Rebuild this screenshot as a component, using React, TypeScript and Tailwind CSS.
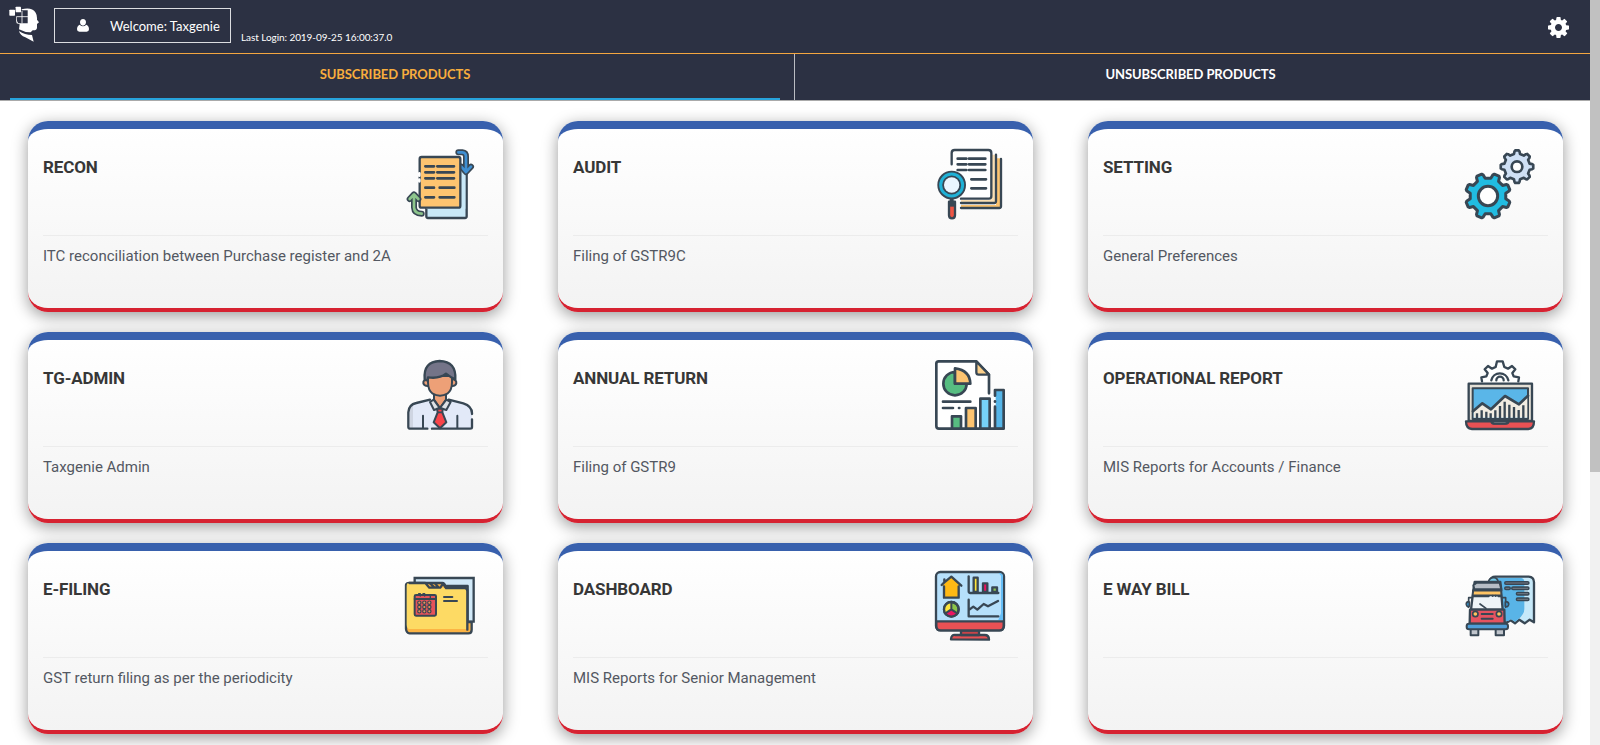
import type { ReactNode } from 'react';

const INK = '#384754';

function gearPath(cx: number, cy: number, outer: number, inner: number, teeth: number, phase = 0) {
  const step = (Math.PI * 2) / teeth;
  const pts: string[] = [];
  for (let i = 0; i < teeth; i++) {
    const a = i * step + phase;
    const corners: [number, number][] = [
      [-0.3, inner],
      [-0.21, outer - 3],
      [-0.14, outer],
      [0.14, outer],
      [0.21, outer - 3],
      [0.3, inner],
    ];
    for (const [f, r] of corners) {
      pts.push(`${(cx + Math.cos(a + f * step) * r).toFixed(1)} ${(cy + Math.sin(a + f * step) * r).toFixed(1)}`);
    }
  }
  return `M${pts.join('L')}Z`;
}

function Art({ top, children }: { top: number; children: ReactNode }) {
  return (
    <svg
      className="h-[70px] w-[70px] overflow-visible"
      viewBox={`30 ${top} 210 210`}
      fill="none"
      stroke={INK}
      strokeWidth={7}
      strokeLinecap="round"
      strokeLinejoin="round"
    >
      {children}
    </svg>
  );
}

const ReconArt = () => (
  <Art top={27}>
    <path d="M94 205V229Q94 234 99 234H210Q215 234 215 229V92" fill="#c9e9f8" />
    <path d="M196 94H211V206H94V196H196Z" fill="#c9e9f8" stroke="none" />
    <path d="M190 37H202Q213 38 213 50V92M199 80L213 96L228 80" strokeWidth={18} />
    <path d="M190 37H202Q213 38 213 50V92M199 80L213 96L228 80" stroke="#3f8fd2" strokeWidth={8} />
    <rect x="74" y="51" width="122" height="152" rx="6" fill="#fdc470" />
    <path d="M73 100V107M73 119V124" stroke="#fff" strokeWidth={8} />
    <path d="M91 79H117M127 79H177M91 97H117M127 97H177M91 115H117M127 115H177M91 143H117M134 143H178M91 172H117M134 172H178" strokeWidth={8} />
    <path d="M57 164V202Q58 221 80 221M44 177L57 163L70 177" strokeWidth={18} />
    <path d="M57 164V202Q58 221 80 221M44 177L57 163L70 177" stroke="#8dc58c" strokeWidth={8} />
  </Art>
);

const AuditArt = () => (
  <Art top={27}>
    <path d="M108 195H213V55H228V203H108Z" fill="#fdc470" stroke="none" />
    <path d="M108 180H197V44H213V188H108Z" fill="#fadfb4" stroke="none" />
    <path d="M228 57V199Q228 204 223 204H108M213 44V184Q213 189 208 189H108" />
    <path d="M82 30H199V176H112L82 80Z" fill="#fff" stroke="none" />
    <path d="M80 73V39Q80 30 89 30H190Q199 30 199 39V168Q199 176 192 176H108" />
    <path d="M98 56H124M132 56H181M98 73H124M132 73H181M98 90H124M132 90H181M139 118H183M139 145H183" strokeWidth={8} />
    <path d="M80 176V188" strokeWidth={12} />
    <path d="M72 185H90V226Q90 235 81 235Q72 235 72 226Z" fill="#ee5545" />
    <path d="M71 193H91" strokeWidth={14} strokeLinecap="butt" />
    <circle cx="80" cy="135" r="32" strokeWidth={22} />
    <circle cx="80" cy="135" r="33" stroke="#1fb1d6" strokeWidth={9} />
    <circle cx="80" cy="135" r="23" fill="#eaf6ff" stroke="none" />
  </Art>
);

const SettingArt = () => (
  <Art top={27}>
    <path d={gearPath(186, 80, 49, 39, 8)} fill="#cfe0f5" strokeWidth={8} />
    <circle cx="186" cy="80" r="16" fill="#fff" strokeWidth={8} />
    <path d={gearPath(99, 168, 68, 54, 8, Math.PI / 8)} fill="#21bce2" strokeWidth={9} />
    <circle cx="99" cy="168" r="29" fill="#fff" strokeWidth={9} />
  </Art>
);

const AdminArt = () => (
  <Art top={30}>
    <path d="M43 236V187Q44 164 64 159L105 149H161L205 160Q231 168 231 190V236Z" fill="#e2e9f8" stroke="none" />
    <path d="M44 233V188Q45 170 54 166V233Z" fill="#cfd5e2" stroke="none" />
    <path d="M97 236H46Q40 236 40 231V187Q41 164 64 159L105 149M161 149L205 160Q231 168 231 190V192M231 208V232Q231 236 225 236H111" />
    <path d="M84 197V234M187 197V234" strokeWidth={6} />
    <path d="M117 133V149L135 174L153 149V133Z" fill="#eda077" strokeWidth={6} />
    <path d="M116 149L134 174L117 180L105 156ZM154 149L135 174L154 180L167 156Z" fill="#dde1e5" strokeWidth={6} />
    <path d="M126 176H143L142 187L154 217L135 235L116 217L128 187Z" fill="#f9444a" strokeWidth={6} />
    <path d="M128 187H142" strokeWidth={5} />
    <path d="M97 88Q84 89 85 100Q87 108 98 108M172 88Q185 89 184 100Q182 108 172 108" fill="#eda077" strokeWidth={6} />
    <path d="M99 78H171V98Q171 120 157 131Q135 143 113 131Q99 120 99 98Z" fill="#eda077" strokeWidth={6} />
    <path d="M89 87Q85 35 134 33Q184 34 181 88L170 83L153 71Q133 87 99 82Q98 93 91 90Z" fill="#747488" />
  </Art>
);

const AnnualArt = () => (
  <Art top={30}>
    <path d="M34 40Q34 33 42 33H154L192 73V236H42Q34 236 34 228Z" fill="#fff" stroke="none" />
    <path d="M192 130V74L154 34H41Q34 34 34 41V228Q34 236 42 236H232" strokeWidth={8} />
    <path d="M154 34V67Q154 74 161 74H192Z" fill="#fbd08b" />
    <path d="M90 66A35 35 0 1 0 125 101H90Z" fill="#57bd81" strokeWidth={8} />
    <path d="M90 55V101H136Q135 61 90 55Z" fill="#fdc470" strokeWidth={8} />
    <path d="M54 155H136M54 174H84M102 174H103" strokeWidth={8} />
    <path d="M81 236V199H108V236Z" fill="#57bd81" strokeWidth={8} />
    <path d="M123 236V174H152V236Z" fill="#fdc470" strokeWidth={8} />
    <path d="M166 236V146H194V236Z" fill="#76d2f8" strokeWidth={8} />
    <path d="M212 123H235V233H212Z" fill="#55b5e8" stroke="none" />
    <path d="M210 137V120H236V236H210V170M210 154V155" strokeWidth={8} />
  </Art>
);

const ReportArt = () => (
  <Art top={30}>
    <path d="M81 94L79 82L94 79L98 69L89 58L99 48L111 56L122 51L126 34H143L148 51L159 56L171 48L181 58L172 69L176 79L192 82L190 94" fill="#fff" />
    <path d="M109 91A26 26 0 0 1 160 91M124 91A11 11 0 0 1 146 91" />
    <rect x="41" y="101" width="190" height="112" fill="#e4dfd5" />
    <path d="M53 115H219V207H53Z" fill="#5ab6e8" strokeWidth={6} />
    <path d="M56 184L82 160L108 178L150 138L192 163L217 137V203H56Z" fill="#f1ece2" stroke="none" />
    <path d="M54 184L82 160L108 178L150 138L192 163L219 137" strokeWidth={8} />
    <path d="M66 190V204M80 181V204M94 185V204M107 190V204M121 181V204M135 168V204M149 155V204M163 164V204M177 171V204M191 180V204M205 166V204" strokeWidth={7} strokeLinecap="butt" />
    <path d="M33 214H109Q111 221 119 221H150Q159 221 161 214H237Q237 237 220 237H51Q33 236 33 214Z" fill="#e95154" />
    <path d="M110 215H160Q157 221 150 221H119Q112 221 110 215Z" fill="#e4dfd5" strokeWidth={5} />
  </Art>
);

const FilingArt = () => (
  <Art top={33}>
    <path d="M59 54H236V185H59Z" fill="#d1e9f8" strokeLinejoin="miter" />
    <path d="M150 78H218V186H230V209Q230 220 220 220H44Q34 219 33 207V75Q34 69 43 69H142Q149 69 151 80Z" fill="#fcb444" />
    <path d="M40 69H91L103 83H209Q217 84 217 94V207H50Q35 209 35 194V77Q35 70 40 69Z" fill="#fdda64" stroke="none" />
    <path d="M43 69H91L103 83H136L144 71L153 84H209Q217 84 217 94V209M106 71L118 82H130L120 70" />
    <rect x="59" y="105" width="64" height="62" rx="4" fill="#e65359" strokeWidth={6} />
    <path d="M59 117H123" strokeWidth={6} />
    <path d="M71 106V101H76V108M84 106V101H89V108M106 105V116" strokeWidth={4} />
    <g fill="#ed9256" strokeWidth={3.5}>
      <circle cx="73" cy="128" r="5" /><circle cx="88" cy="128" r="5" /><circle cx="103" cy="128" r="5" />
      <circle cx="73" cy="141" r="5" /><circle cx="88" cy="141" r="5" /><circle cx="103" cy="141" r="5" />
      <circle cx="73" cy="154" r="5" /><circle cx="88" cy="154" r="5" /><circle cx="103" cy="154" r="5" />
    </g>
    <path d="M147 111H172M147 123H186" strokeWidth={6} />
  </Art>
);

const DashboardArt = () => (
  <Art top={33}>
    <path d="M78 238Q79 223 91 225H179Q192 225 192 239Z" fill="#e95154" />
    <path d="M108 211H162V225H108Z" fill="#c74449" />
    <rect x="33" y="36" width="204" height="175" rx="13" fill="#b6e0fb" />
    <path d="M221 39Q234 39 234 50V180H220L228 160V47Z" fill="#65bef7" stroke="none" />
    <path d="M34 184H236V197Q236 211 223 211H47Q34 211 34 197Z" fill="#e95154" />
    <path d="M57 112V78H51L79 50L109 78H101V112Z" fill="#feb914" stroke="none" />
    <path d="M50 75L58 67V58M58 67L79 50L109 77M57 79V113H101V79" />
    <path d="M131 49V94Q131 99 136 99H220" />
    <path d="M146 96V53H158V96Z" fill="#fde53c" />
    <path d="M174 96V70H187V96Z" fill="#eb1462" />
    <path d="M202 96V82H216V96Z" fill="#8cc152" />
    <circle cx="79" cy="148" r="22" fill="#8bc448" />
    <path d="M79 148V127A21 21 0 0 0 61 160Z" fill="#fde53c" stroke="none" />
    <path d="M79 148L61 160Q79 178 97 160Z" fill="#eb1462" stroke="none" />
    <path d="M79 127V148L61 160M79 148L97 160" strokeWidth={6} />
    <circle cx="79" cy="148" r="22" />
    <path d="M131 119V169H220M133 149L145 140L157 149L176 132L189 139L219 123" />
  </Art>
);

const WayBillArt = () => (
  <Art top={33}>
    <path d="M104 64Q107 50 121 50H221Q237 51 237 67V187L224 179L209 190L193 179L180 190L167 181L157 187H130V65Z" fill="#c7e9f9" />
    <path d="M130 64Q129 54 122 54H199Q208 55 208 67V147Q208 162 190 178L180 185L168 178L160 183H134V64Z" fill="#59b4e7" stroke="none" />
    <path d="M100 66Q104 52 117 53Q128 54 130 67" fill="#76cbe9" strokeWidth={5} />
    <path d="M153 69H218M153 85H162M174 85H218M188 101H218M188 118H218" strokeWidth={12} />
    <path d="M153 69H218M153 85H162M174 85H218M188 101H218M188 118H218" stroke="#747b85" strokeWidth={3} />
    <path d="M59 66H136L139 91H55Z" fill="#c0c5cc" />
    <path d="M58 88L55 76L65 68H134L139 88Z" fill="#b7bdc5" strokeWidth={6} />
    <path d="M55 91H138L143 149H48Z" fill="#edf3f7" />
    <path d="M55 92H138L139 106H53Z" fill="#fec464" strokeWidth={5} />
    <path d="M53 109H101M130 109H139M113 107V108M122 107V108" strokeWidth={6} />
    <path d="M75 132L93 145M49 113H41V142M143 113H152V142" strokeWidth={5} />
    <path d="M40 125Q33 126 34 134Q36 142 43 139V126ZM154 125Q162 126 161 134Q159 142 151 139V126Z" fill="#3196d3" strokeWidth={5} />
    <path d="M47 209V226H70V209M122 209V226H147V209" fill="#c0c5cc" strokeWidth={6} />
    <path d="M45 149H148L149 191H44Z" fill="#e65360" />
    <circle cx="61" cy="162" r="8" fill="#ffc35e" strokeWidth={5} />
    <circle cx="132" cy="162" r="8" fill="#ffc35e" strokeWidth={5} />
    <path d="M80 162H113M80 176H113" strokeWidth={6} />
    <rect x="35" y="191" width="124" height="17" rx="7" fill="#4f9ed8" strokeWidth={6} />
  </Art>
);

function HeadLogo() {
  return (
    <svg className="h-[36px] w-[30px] shrink-0" viewBox="28 19 90 108" fill="#fff">
      <path d="M66 29Q96 21 108 39Q113 47 112 60L118 68L112 73V84Q111 93 99 92L93 98Q77 99 58 89L60 74L51 71Q49 66 49 51H66Z" />
      <path d="M58 94Q75 106 97 106L102 126L77 113Q61 107 58 94Z" />
      <rect x="29" y="30" width="17" height="18" rx="2" />
      <path d="M52 32H84V71H56Q51 66 51 52Z" fill="#2c3143" />
      <rect x="48" y="21" width="16" height="17" rx="2" />
      <path d="M50 51H85M67 34V71" stroke="#fff" strokeWidth={2.5} />
    </svg>
  );
}

const UserIcon = () => (
  <svg className="h-[13px] w-[12px]" viewBox="0 0 36 39" fill="#fff">
    <path d="M18 0C24 0 27 4 27 10S23 20 18 20S9 16 9 10S12 0 18 0ZM8 17Q18 26 28 17Q36 20 36 31Q36 38 29 38H7Q0 38 0 31Q0 20 8 17Z" />
  </svg>
);

const CogIcon = () => (
  <svg className="h-[21px] w-[21px]" viewBox="0 128 1536 1536" fill="#fff" fillRule="evenodd">
    <path d="M1024 896q0 106-75 181t-181 75-181-75-75-181 75-181 181-75 181 75 75 181zm512-109v222q0 12-8 23t-20 13l-185 28q-19 54-39 91 35 50 107 138 10 12 10 25t-9 23q-27 37-99 108t-94 71q-12 0-26-9l-138-108q-44 23-91 38-16 136-29 186-7 28-36 28h-222q-14 0-24.500-8.500t-11.500-21.500l-28-184q-49-16-90-37l-141 107q-10 9-25 9-14 0-25-11-126-114-165-168-7-10-7-23 0-12 8-23 15-21 51-66.500t54-70.500q-27-50-41-99l-183-27q-13-2-21-12.500t-8-23.500v-222q0-12 8-23t19-13l186-28q14-46 39-92-40-57-107-138-10-12-10-24 0-10 9-23 26-36 98.500-107.500t94.500-71.500q13 0 26 10l138 107q44-23 91-38 16-136 29-186 7-28 36-28h222q14 0 24.500 8.500t11.500 21.500l28 184q49 16 90 37l142-107q9-9 24-9 13 0 25 10 129 119 165 170 7 8 7 22 0 12-8 23-15 21-51 66.500t-54 70.500q26 50 41 98l183 28q13 2 21 12.500t8 23.500z" />
  </svg>
);

const products: { title: string; text: string; art: ReactNode }[] = [
  { title: 'RECON', text: 'ITC reconciliation between Purchase register and 2A', art: <ReconArt /> },
  { title: 'AUDIT', text: 'Filing of GSTR9C', art: <AuditArt /> },
  { title: 'SETTING', text: 'General Preferences', art: <SettingArt /> },
  { title: 'TG-ADMIN', text: 'Taxgenie Admin', art: <AdminArt /> },
  { title: 'ANNUAL RETURN', text: 'Filing of GSTR9', art: <AnnualArt /> },
  { title: 'OPERATIONAL REPORT', text: 'MIS Reports for Accounts / Finance', art: <ReportArt /> },
  { title: 'E-FILING', text: 'GST return filing as per the periodicity', art: <FilingArt /> },
  { title: 'DASHBOARD', text: 'MIS Reports for Senior Management', art: <DashboardArt /> },
  { title: 'E WAY BILL', text: '', art: <WayBillArt /> },
];

function ProductCard({ title, text, art }: { title: string; text: string; art: ReactNode }) {
  return (
    <article className="h-[191px] rounded-[20px] border-t-8 border-b-4 border-t-[#3860ad] border-b-[#d62231] bg-linear-to-b from-white to-[#f3f3f3] px-[15px] shadow-[0_4px_16px_rgba(0,0,0,0.4)]">
      <div className="flex h-[107px] items-start justify-between border-b border-[#ececec] pt-5 pr-[13px]">
        <h2 className="pt-[6px] text-[17px] leading-6 font-bold tracking-[-0.12px] text-[#373737]">{title}</h2>
        {art}
      </div>
      <p className="pt-[9px] text-[15px] leading-[22px] text-[#535862]">{text}</p>
    </article>
  );
}

export default function App() {
  return (
    <div className="flex h-[745px] w-full overflow-hidden bg-white font-['Roboto',sans-serif]">
      <div className="flex min-w-0 flex-1 flex-col">
        <header className="flex h-[54px] shrink-0 items-start border-b border-[#f4a640] bg-[#2c3143] pr-[21px] pl-[9px] font-['Lato',sans-serif] text-white">
          <div className="pt-[6px]">
            <HeadLogo />
          </div>
          <div className="mt-2 ml-[15px] flex h-[35px] w-[177px] items-center border border-[#dcdde0] pl-[22px]">
            <UserIcon />
            <span className="ml-[21px] pt-px text-[13px] leading-5 whitespace-nowrap">Welcome: Taxgenie</span>
          </div>
          <span className="mt-[30px] ml-[10px] text-[10px] leading-[15px] tracking-[-0.07px] whitespace-nowrap">Last Login: 2019-09-25 16:00:37.0</span>
          <div className="mt-[17px] ml-auto">
            <CogIcon />
          </div>
        </header>
        <nav className="grid h-[47px] shrink-0 grid-cols-[795px_1fr] border-b border-[#aaaaaa] bg-[#2c3143] text-center font-['Lato',sans-serif] text-[13px] font-bold tracking-[-0.08px]">
          <div className="border-r border-[#babcc2] pr-[14px] pl-[10px] text-[#f8ad3d]">
            <div className="h-[46px] border-b-2 border-[#27a3dc] pt-[10px] leading-5">SUBSCRIBED PRODUCTS</div>
          </div>
          <div className="pt-[10px] pr-1 leading-5 text-white">UNSUBSCRIBED PRODUCTS</div>
        </nav>
        <main className="grid grid-cols-[475px_475px_475px] gap-x-[55px] gap-y-5 pt-5 pl-7">
          {products.map((product) => (
            <ProductCard key={product.title} {...product} />
          ))}
        </main>
      </div>
      <div className="w-[10px] shrink-0 bg-[#f1f1f1]">
        <div className="h-[472px] bg-[#c1c1c1]" />
      </div>
    </div>
  );
}
